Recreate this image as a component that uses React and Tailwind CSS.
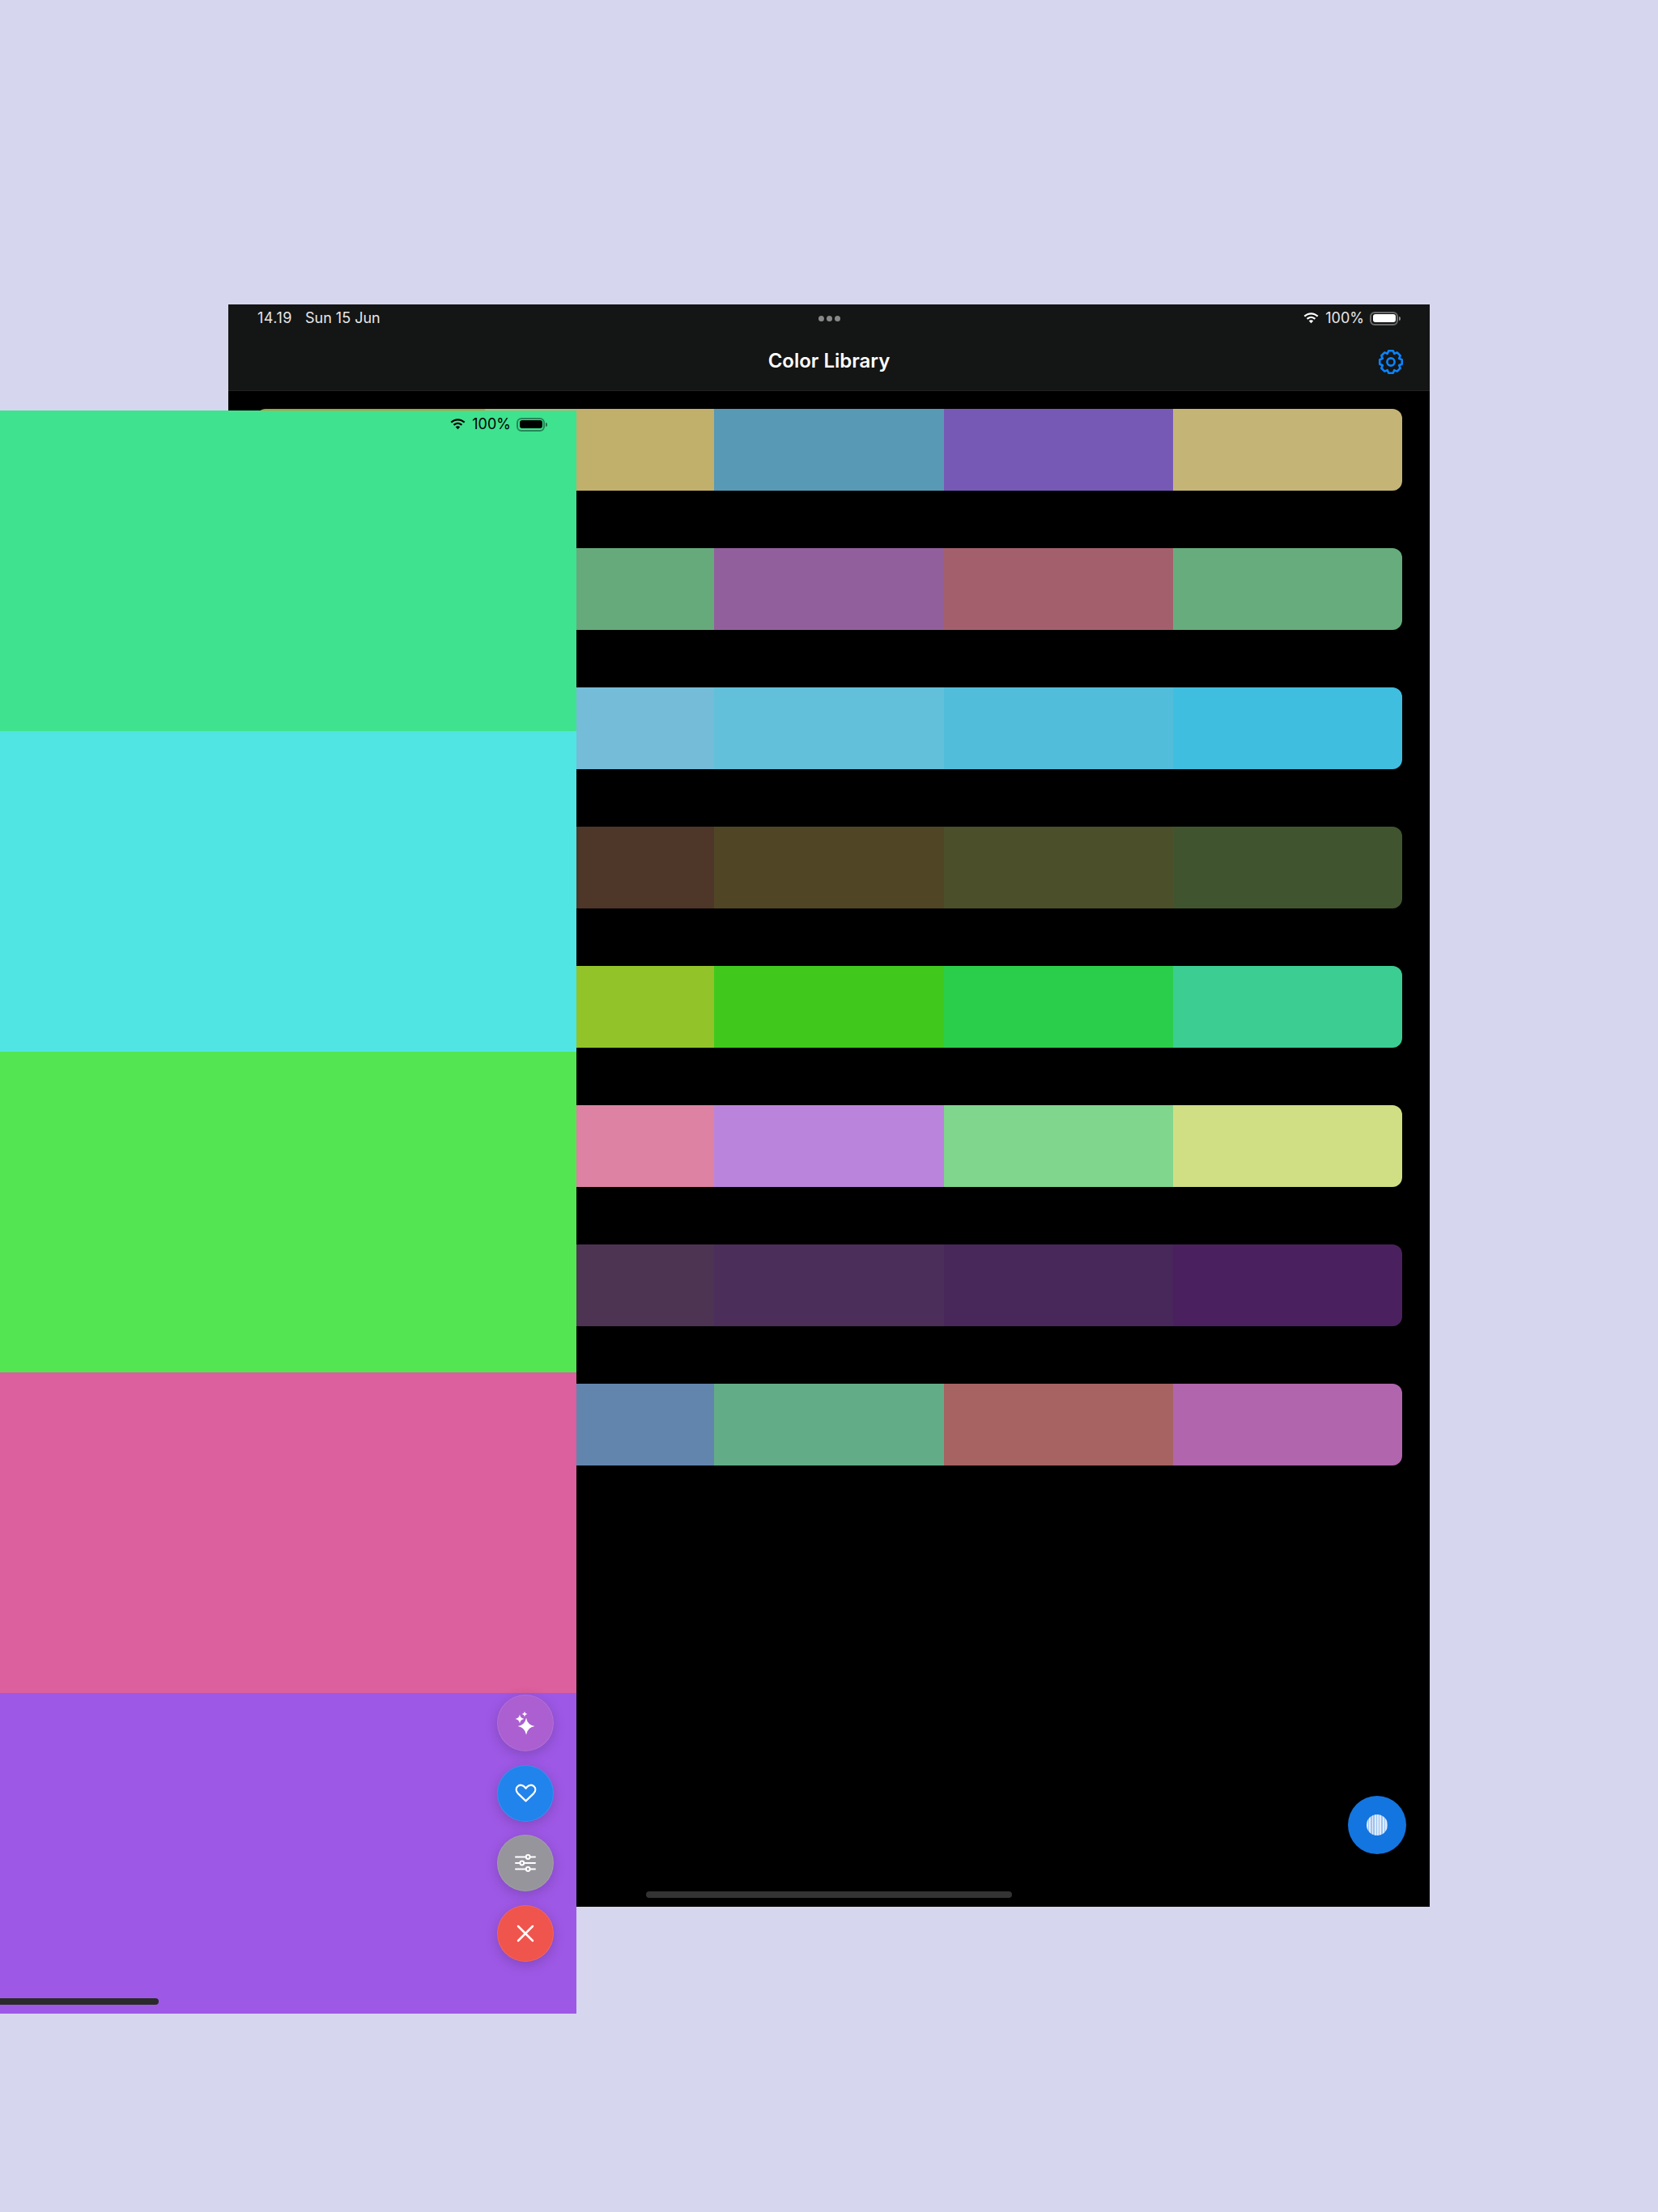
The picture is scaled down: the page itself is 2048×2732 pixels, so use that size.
import React from "react";

const rows = [
  ["#c8962f", "#c1af6c", "#5899b5", "#7659b5", "#c4b577"],
  ["#66aa7c", "#66aa7c", "#925f9d", "#a3606c", "#66ac7d"],
  ["#74bcd8", "#74bcd8", "#62c0da", "#52bddb", "#40bee0"],
  ["#4e3629", "#4e3629", "#504626", "#4b4f2a", "#40552f"],
  ["#92c42a", "#92c42a", "#40c91c", "#2bce4a", "#3ccd92"],
  ["#dd82a2", "#dd82a2", "#bb84dc", "#80d68c", "#d0de84"],
  ["#4d3452", "#4d3452", "#4b2e59", "#48275b", "#4a215e"],
  ["#6285ae", "#6285ae", "#62ad88", "#a66362", "#b065ac"],
];
const bands = ["#3fe28f", "#50e5e2", "#53e652", "#dc5f9e", "#9e58e6"];

function Wifi({ color }) {
  return (
    <svg width="21" height="16" viewBox="0 0 20 15" fill={color}>
      <path d="M10 3.200c2.700 0 5.200 1 7.100 2.800l1.400-1.500C16.200 2.300 13.200 1 10 1S3.800 2.300 1.500 4.500L2.900 6C4.800 4.200 7.300 3.200 10 3.200z" />
      <path d="M10 7.500c1.500 0 2.900.6 4 1.600l1.400-1.500C13.900 6.200 12 5.300 10 5.300S6.100 6.200 4.600 7.600L6 9.100c1.100-1 2.500-1.600 4-1.600z" />
      <path d="M10 9.600c-1 0-1.900.4-2.600 1L10 13.400l2.600-2.800c-.7-.6-1.600-1-2.600-1z" />
    </svg>
  );
}

function Battery({ fill, border }) {
  return (
    <div className="flex items-center gap-[1px]">
      <div className={`flex h-[17px] w-[35px] rounded-[6px] border-2 p-[1.5px] ${border}`}>
        <div className={`flex-1 rounded-[3px] ${fill}`} />
      </div>
      <div className={`h-[5px] w-[2px] rounded-r-sm ${fill} opacity-50`} />
    </div>
  );
}

// eight rounded teeth around a ring
const gearPath = (() => {
  const pts = [];
  const cx = 16;
  const cy = 16;
  for (let i = 0; i < 8; i++) {
    const a = (i * Math.PI) / 4 - Math.PI / 2;
    const p = (r, d) => [cx + r * Math.cos(a + d), cy + r * Math.sin(a + d)];
    pts.push(p(11, -0.4), p(14, -0.2), p(14, 0.2), p(11, 0.4));
  }
  return "M" + pts.map(([x, y]) => `${x.toFixed(2)} ${y.toFixed(2)}`).join("L") + "Z";
})();

function Gear() {
  return (
    <svg width="32" height="32" viewBox="0 0 32 32" fill="none" stroke="#0a84ff" strokeWidth="2.600" strokeLinejoin="round">
      <path d={gearPath} />
      <circle cx="16" cy="16" r="4.600" />
    </svg>
  );
}

const star = (cx, cy, r) => {
  const k = r * 0.14;
  return `M${cx} ${cy - r}Q${cx + k} ${cy - k} ${cx + r} ${cy}Q${cx + k} ${cy + k} ${cx} ${cy + r}Q${cx - k} ${cy + k} ${cx - r} ${cy}Q${cx - k} ${cy - k} ${cx} ${cy - r}Z`;
};

function Sparkles() {
  return (
    <svg width="30" height="30" viewBox="0 0 30 30" fill="white">
      <path d={star(16, 19, 10.5)} />
      <path d={star(8, 10, 5.5)} />
      <path d={star(14, 4, 3.5)} />
    </svg>
  );
}

function Heart() {
  return (
    <svg width="27" height="25" viewBox="0 0 26 24" fill="none" stroke="white" strokeWidth="2.200" strokeLinejoin="round">
      <path d="M13 21.500 3.500 12.300C1 9.700 1.200 6.200 3.300 4.100c2.400-2.300 6-1.800 8 .5L13 6.500l1.700-1.900c2-2.300 5.600-2.800 8-.5 2.100 2.100 2.300 5.600-.2 8.200L13 21.500z" />
    </svg>
  );
}

function Sliders() {
  return (
    <svg width="26" height="22" viewBox="0 0 26 22" fill="none" stroke="white" strokeWidth="2" strokeLinecap="round">
      <path d="M1 3.500h12.500M19 3.500h6M1 11h5M11.500 11H25M1 18.500h12.500M19 18.500h6" />
      <circle cx="16.200" cy="3.500" r="2.400" />
      <circle cx="8.800" cy="11" r="2.400" />
      <circle cx="16.200" cy="18.500" r="2.400" />
    </svg>
  );
}

function Cross() {
  return (
    <svg width="22" height="22" viewBox="0 0 22 22" fill="none" stroke="white" strokeWidth="2.500" strokeLinecap="round">
      <path d="M2 2l18 18M20 2 2 20" />
    </svg>
  );
}

const fabBase =
  "flex h-[70px] w-[70px] items-center justify-center rounded-full border border-white/10 shadow-[0_4px_16px_rgba(0,0,0,0.18)]";

export default function App() {
  return (
    <div className="relative h-[2732px] w-[2048px] overflow-hidden bg-[#d6d6ee] font-['Inter','Liberation_Sans',sans-serif]">
      {/* Main iPad window */}
      <div className="absolute left-[282px] top-[376px] flex h-[1979px] w-[1484px] flex-col bg-black">
        <div className="flex h-[107px] flex-col border-b border-[#222222] bg-[#141515]">
          <div className="flex h-[34px] items-center justify-between px-[36px] text-[18px] leading-none text-white/90">
            <div className="flex w-[300px] gap-[16px]">
              <span className="tracking-[0.5px]">14.19</span>
              <span>Sun 15 Jun</span>
            </div>
            <div className="flex gap-[3px]">
              <div className="h-[7px] w-[7px] rounded-full bg-[#888888]" />
              <div className="h-[7px] w-[7px] rounded-full bg-[#888888]" />
              <div className="h-[7px] w-[7px] rounded-full bg-[#888888]" />
            </div>
            <div className="flex w-[300px] items-center justify-end gap-[7px]">
              <Wifi color="white" />
              <span>100%</span>
              <Battery fill="bg-white" border="border-[#6a6a6a]" />
            </div>
          </div>
          <div className="relative flex flex-1 items-center justify-center">
            <span className="text-[24px] font-semibold leading-none text-white">Color Library</span>
            <div className="absolute right-[32px] top-[21px]">
              <Gear />
            </div>
          </div>
        </div>
        <div className="flex flex-col gap-[71px] px-[34px] pt-[22px]">
          {rows.map((row, i) => (
            <div key={i} className="flex h-[101px] overflow-hidden rounded-[12px]">
              {row.map((c, j) => (
                <div key={j} className="flex-1" style={{ backgroundColor: c }} />
              ))}
            </div>
          ))}
        </div>
        <div className="absolute bottom-[65px] right-[29px] flex h-[72px] w-[72px] items-center justify-center rounded-full bg-[#1375e0]">
          <div className="h-[26px] w-[26px] rounded-full bg-[repeating-linear-gradient(90deg,#dfebfb_0px,#dfebfb_1.800px,#9dc3f0_1.800px,#9dc3f0_3.300px)]" />
        </div>
        <div className="absolute bottom-[11px] left-[516px] h-[8px] w-[452px] rounded-full bg-[#333333]" />
      </div>

      {/* Slide-over window */}
      <div className="absolute left-0 top-[507px] flex h-[1980px] w-[712px] flex-col">
        {bands.map((c) => (
          <div key={c} className="flex-1" style={{ backgroundColor: c }} />
        ))}
        <div className="absolute right-[36px] top-[2px] flex h-[30px] items-center gap-[7px] text-[18px] leading-none text-black">
          <Wifi color="black" />
          <span>100%</span>
          <Battery fill="bg-black" border="border-black/40" />
        </div>
        <div className="absolute left-[614px] top-[1586px] flex flex-col gap-[16.5px]">
          <div className={`${fabBase} bg-[#ab5fd0]`}>
            <Sparkles />
          </div>
          <div className={`${fabBase} bg-[#2183ec]`}>
            <Heart />
          </div>
          <div className={`${fabBase} bg-[#97959c]`}>
            <Sliders />
          </div>
          <div className={`${fabBase} bg-[#ef544d]`}>
            <Cross />
          </div>
        </div>
        <div className="absolute bottom-[11px] left-0 h-[8px] w-[196px] rounded-r-full bg-[#2a2a2a]" />
      </div>
    </div>
  );
}
